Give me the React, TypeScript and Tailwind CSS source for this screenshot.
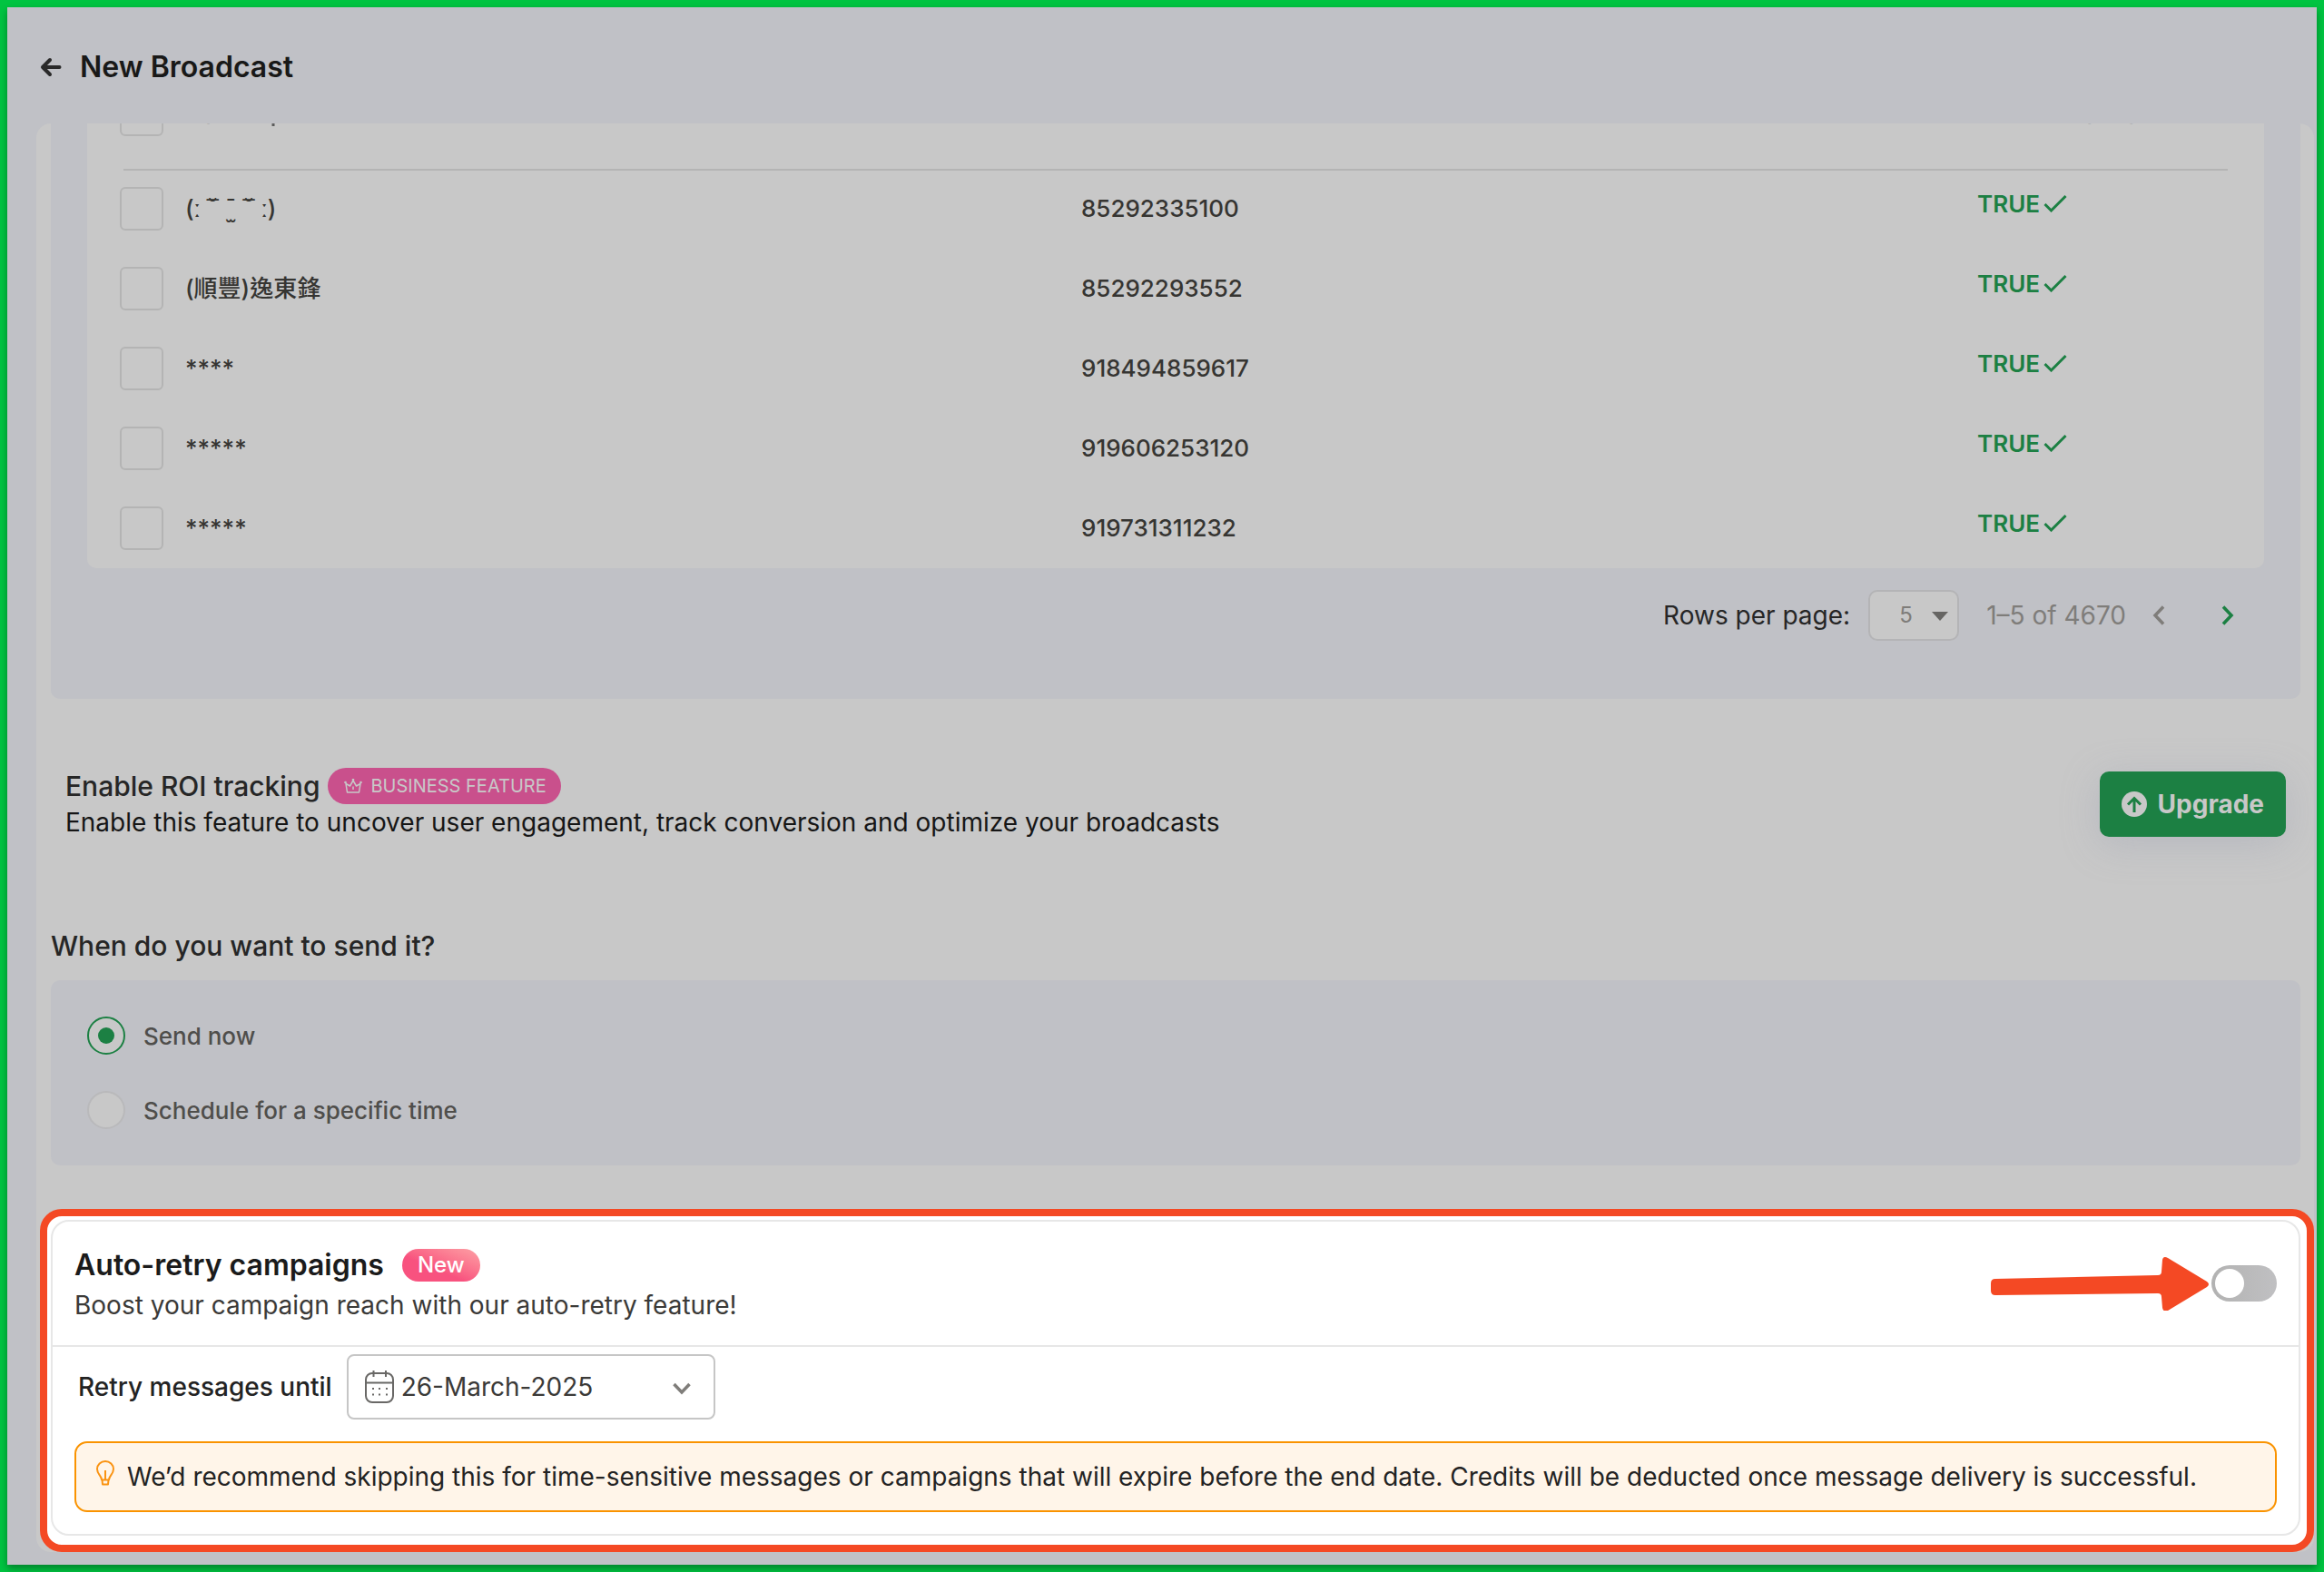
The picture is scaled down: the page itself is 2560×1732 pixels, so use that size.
import React from "react";

const contacts = [
  { name: "(ː ˘̅ ˉ̫ ˘̅ ː)", phone: "85292335100" },
  { name: "(順豐)逸東鋒", phone: "85292293552" },
  { name: "****", phone: "918494859617" },
  { name: "*****", phone: "919606253120" },
  { name: "*****", phone: "919731311232" },
];

const RowCheckbox: React.FC<{ label: string }> = ({ label }) => (
  <input
    type="checkbox"
    aria-label={label}
    className="-ml-1 block size-12 appearance-none rounded-md border-2 border-[#b4b4b4]"
  />
);

const ContactsTable: React.FC = () => (
  <div className="overflow-hidden rounded-b-[10px] bg-[#c8c8c8] px-10">
    <table className="-mt-[70px] w-full table-fixed text-left text-[26px] font-medium text-[#363532]">
      <colgroup>
        <col className="w-[68px]" />
        <col />
        <col />
        <col className="w-[276px]" />
      </colgroup>
      <thead>
        <tr className="h-[120px] text-[#7a7a7a] shadow-[0_2px_0_#b4b4b4]">
          <th className="p-0">
            <RowCheckbox label="Select all" />
          </th>
          <th className="p-0 font-medium">
            <span className="flex items-center gap-3.5">
              Name
              <svg viewBox="0 0 20 28" className="h-7 w-5" fill="none" stroke="#5c5c5c" strokeWidth="3">
                <path d="M10 2v25M3 9l7-7 7 7" />
              </svg>
            </span>
          </th>
          <th className="p-0 font-medium">Phone</th>
          <th className="p-0 font-medium">Allow Broadcast</th>
        </tr>
      </thead>
      <tbody>
        {contacts.map((contact) => (
          <tr key={contact.phone} className="h-[88px]">
            <td className="p-0">
              <RowCheckbox label={`Select ${contact.phone}`} />
            </td>
            <td className="p-0 pb-0.5">{contact.name}</td>
            <td className="p-0 pb-0.5">{contact.phone}</td>
            <td className="p-0 pb-3">
              <span className="flex items-center gap-1 font-semibold text-[#1c8043]">
                TRUE
                <svg viewBox="0 0 26 20" className="h-5 w-[26px]" fill="none" stroke="currentColor" strokeWidth="3">
                  <path d="M1.500 11l7 7L24.500 2" />
                </svg>
              </span>
            </td>
          </tr>
        ))}
      </tbody>
    </table>
  </div>
);

const Pagination: React.FC = () => (
  <div className="flex items-center justify-end pt-6 pr-4 pb-16 text-[28px] text-[#7f7d7a]">
    <label htmlFor="rows" className="mr-5 text-[#262626]">
      Rows per page:
    </label>
    <div className="relative">
      <select
        id="rows"
        className="block h-14 w-[100px] appearance-none rounded-[10px] border-2 border-[#b4b4b6] bg-[#c8c8c8] pl-8 text-2xl"
      >
        <option>5</option>
      </select>
      <svg viewBox="0 0 18 10" className="pointer-events-none absolute top-6 right-3 h-2.5 w-[18px]" fill="#666563">
        <path d="M0 0h18l-9 10z" />
      </svg>
    </div>
    <span className="ml-[30px]">1–5 of 4670</span>
    <button aria-label="Previous page" className="ml-3 flex h-12 w-12 items-center justify-center">
      <svg viewBox="0 0 14 22" className="h-[22px] w-3.5" fill="none" stroke="currentColor" strokeWidth="3.500">
        <path d="M12 1.500L3 11l9 9.500" />
      </svg>
    </button>
    <button aria-label="Next page" className="ml-7 flex h-12 w-12 items-center justify-center text-[#1c8043]">
      <svg viewBox="0 0 14 22" className="h-[22px] w-3.5" fill="none" stroke="currentColor" strokeWidth="3.500">
        <path d="M2 1.500L11 11l-9 9.500" />
      </svg>
    </button>
  </div>
);

const RoiTracking: React.FC = () => (
  <div className="mt-19 flex items-center justify-between px-4">
    <div>
      <div className="flex h-10 items-center gap-2">
        <h2 className="text-[30px] font-medium text-[#262626]">Enable ROI tracking</h2>
        <span className="flex h-10 items-center gap-2.5 rounded-full bg-[#c9508c] pr-4 pl-[18px] text-[20px] text-[#c8c8c8]">
          <svg viewBox="0 0 20 16" className="h-4 w-5" fill="none" stroke="currentColor" strokeWidth="1.500" strokeLinejoin="round">
            <path d="M3.500 15L2 5.500l4.500 2.500L10 2l3.500 6L18 5.500 16.500 15z" />
            <path d="M10 8.500v3.500" />
            <circle cx="1.500" cy="4" r=".6" />
            <circle cx="10" cy="1" r=".6" />
            <circle cx="18.500" cy="4" r=".6" />
          </svg>
          BUSINESS FEATURE
        </span>
      </div>
      <p className="text-[28px] leading-10 text-[#161616]">
        Enable this feature to uncover user engagement, track conversion and optimize your broadcasts
      </p>
    </div>
    <button className="flex h-[72px] items-center gap-3 rounded-[10px] bg-[#1c8043] px-6 text-[28px] font-bold text-[#c8c8c8] shadow-[0_8px_40px_rgba(150,155,175,0.35)]">
      <svg viewBox="0 0 28 28" className="size-7">
        <circle cx="14" cy="14" r="14" fill="currentColor" />
        <path d="M14 23V8M7 14.500L14 7.500l7 7" fill="none" stroke="#1c8043" strokeWidth="3" />
      </svg>
      Upgrade
    </button>
  </div>
);

const radioClass =
  "relative size-[42px] appearance-none rounded-full border-2 border-[#b9b9bb] bg-[#c8c8c8] checked:border-[#1c8043] checked:before:absolute checked:before:inset-2.5 checked:before:rounded-full checked:before:bg-[#1c8043]";

const SendTime: React.FC = () => (
  <section>
    <h2 className="mt-24 text-[30px] leading-10 font-medium text-[#262626]">When do you want to send it?</h2>
    <div className="mt-[18px] flex flex-col gap-10 rounded-[10px] bg-[#c0c1c6] p-10 text-[26px] font-medium text-[#4f4e4b]">
      <label className="flex h-[42px] items-center gap-5">
        <input type="radio" name="when" defaultChecked className={radioClass} />
        Send now
      </label>
      <label className="flex h-[42px] items-center gap-5">
        <input type="radio" name="when" className={radioClass} />
        Schedule for a specific time
      </label>
    </div>
  </section>
);

const CalendarIcon: React.FC = () => (
  <svg viewBox="0 0 32 36" className="pointer-events-none absolute top-[18px] left-5 h-9 w-8" fill="none" stroke="#696866" strokeWidth="2">
    <rect x="1" y="3" width="30" height="32" rx="7" />
    <path d="M1 13.500h30M9.500 0v7M23 0v7" />
    <path d="M8 20h2M15 20h2M23 20h2M8 26.500h2M15 26.500h2M23 26.500h2" />
  </svg>
);

const AutoRetry: React.FC = () => (
  <section className="ml-1 mt-12 rounded-3xl border-8 border-[#f44924] bg-white pt-1 pr-[7px] pb-2.5 pl-1">
    <div className="rounded-[20px] border-2 border-[#e7e7e7]">
      <div className="flex items-start justify-between border-b-2 border-[#e7e7e7] px-6 pt-7 pb-5">
        <div>
          <div className="flex h-10 items-center gap-5">
            <h2 id="auto-retry" className="text-[32px] font-semibold text-[#1b1b1b]">
              Auto-retry campaigns
            </h2>
            <span className="flex h-9 items-center rounded-full bg-linear-to-tr from-[#f8527f] from-40% to-[#fca0a5] px-[17px] text-2xl font-medium text-white">
              New
            </span>
          </div>
          <p className="text-[28px] leading-12 text-[#3b3a38]">Boost your campaign reach with our auto-retry feature!</p>
        </div>
        <div className="flex h-20 items-center gap-[3px]">
          <svg viewBox="0 0 240 60" className="h-[60px] w-60" fill="#f44924">
            <path d="M5 25L184 21Q188 21 188 17L189 4Q190-1 195 2L238 28Q242 31 238 34L195 60Q190 62 189 57L188 45Q188 41 184 41L5 43Q0 43 0 38V30Q0 25 5 25z" />
          </svg>
          <input
            type="checkbox"
            role="switch"
            aria-labelledby="auto-retry"
            className="relative h-10 w-[72px] appearance-none rounded-full bg-linear-to-r from-[#b2b2b2] to-[#c0c0c2] before:absolute before:top-1 before:left-1 before:size-8 before:rounded-full before:bg-white"
          />
        </div>
      </div>
      <div className="px-6 pt-2 pb-6">
        <div className="flex items-center gap-4 pl-1 text-[28px]">
          <label htmlFor="until" className="font-medium text-[#232323]">
            Retry messages until
          </label>
          <div className="relative">
            <select
              id="until"
              className="block h-[72px] w-[406px] appearance-none rounded-lg border-2 border-[#c6c6c6] bg-white pl-[58px] text-[#3b3a38]"
            >
              <option>26-March-2025</option>
            </select>
            <CalendarIcon />
            <svg viewBox="0 0 20 14" className="pointer-events-none absolute top-[31px] right-[27px] h-3.5 w-5" fill="none" stroke="#7f7d7a" strokeWidth="3.500">
              <path d="M1.500 2L10 11l8.500-9" />
            </svg>
          </div>
        </div>
        <div className="mt-6 flex h-[78px] items-center gap-3.5 rounded-[14px] border-2 border-[#fa9300] bg-[#fff5e9] px-[22px] text-[28px] text-[#232323]">
          <svg viewBox="0 0 20 28" className="mb-2 h-7 w-5" fill="none" stroke="#fa9312" strokeWidth="2" strokeLinejoin="round">
            <path d="M6 21.500C6 17 1 15.500 1 9.500a9 8.500 0 0 1 18 0c0 6-5 7.500-5 12zM6.500 21.500l.5 5h6l.5-5M10 11v10" />
          </svg>
          We’d recommend skipping this for time-sensitive messages or campaigns that will expire before the end date. Credits will be
          deducted once message delivery is successful.
        </div>
      </div>
    </div>
  </section>
);

export default function App() {
  return (
    <div className="min-h-screen overflow-hidden bg-[#00c441] p-2 font-['Inter','Noto_Sans_CJK_TC','DejaVu_Sans',sans-serif]">
      <div className="bg-[#c0c1c6] pb-3.5 shadow-[0_4px_8px_rgba(0,0,0,0.35)]">
        <header className="flex h-32 items-center gap-5 pt-1 pl-9">
          <button aria-label="Back">
            <svg viewBox="0 0 24 24" className="size-6" fill="none" stroke="#2a2a2a" strokeWidth="4" strokeLinecap="round" strokeLinejoin="round">
              <path d="M21.500 12H3M11 4L3 12l8 8" />
            </svg>
          </button>
          <h1 className="text-[32px] font-semibold text-[#191918]">New Broadcast</h1>
        </header>
        <main className="mr-[3px] ml-8 overflow-hidden rounded-2xl bg-[#c8c8c8]">
          <div className="mr-[15px] ml-4">
            <div className="rounded-b-[10px] bg-[#c0c1c6] px-10">
              <ContactsTable />
              <Pagination />
            </div>
            <RoiTracking />
            <SendTime />
          </div>
          <AutoRetry />
        </main>
      </div>
    </div>
  );
}
